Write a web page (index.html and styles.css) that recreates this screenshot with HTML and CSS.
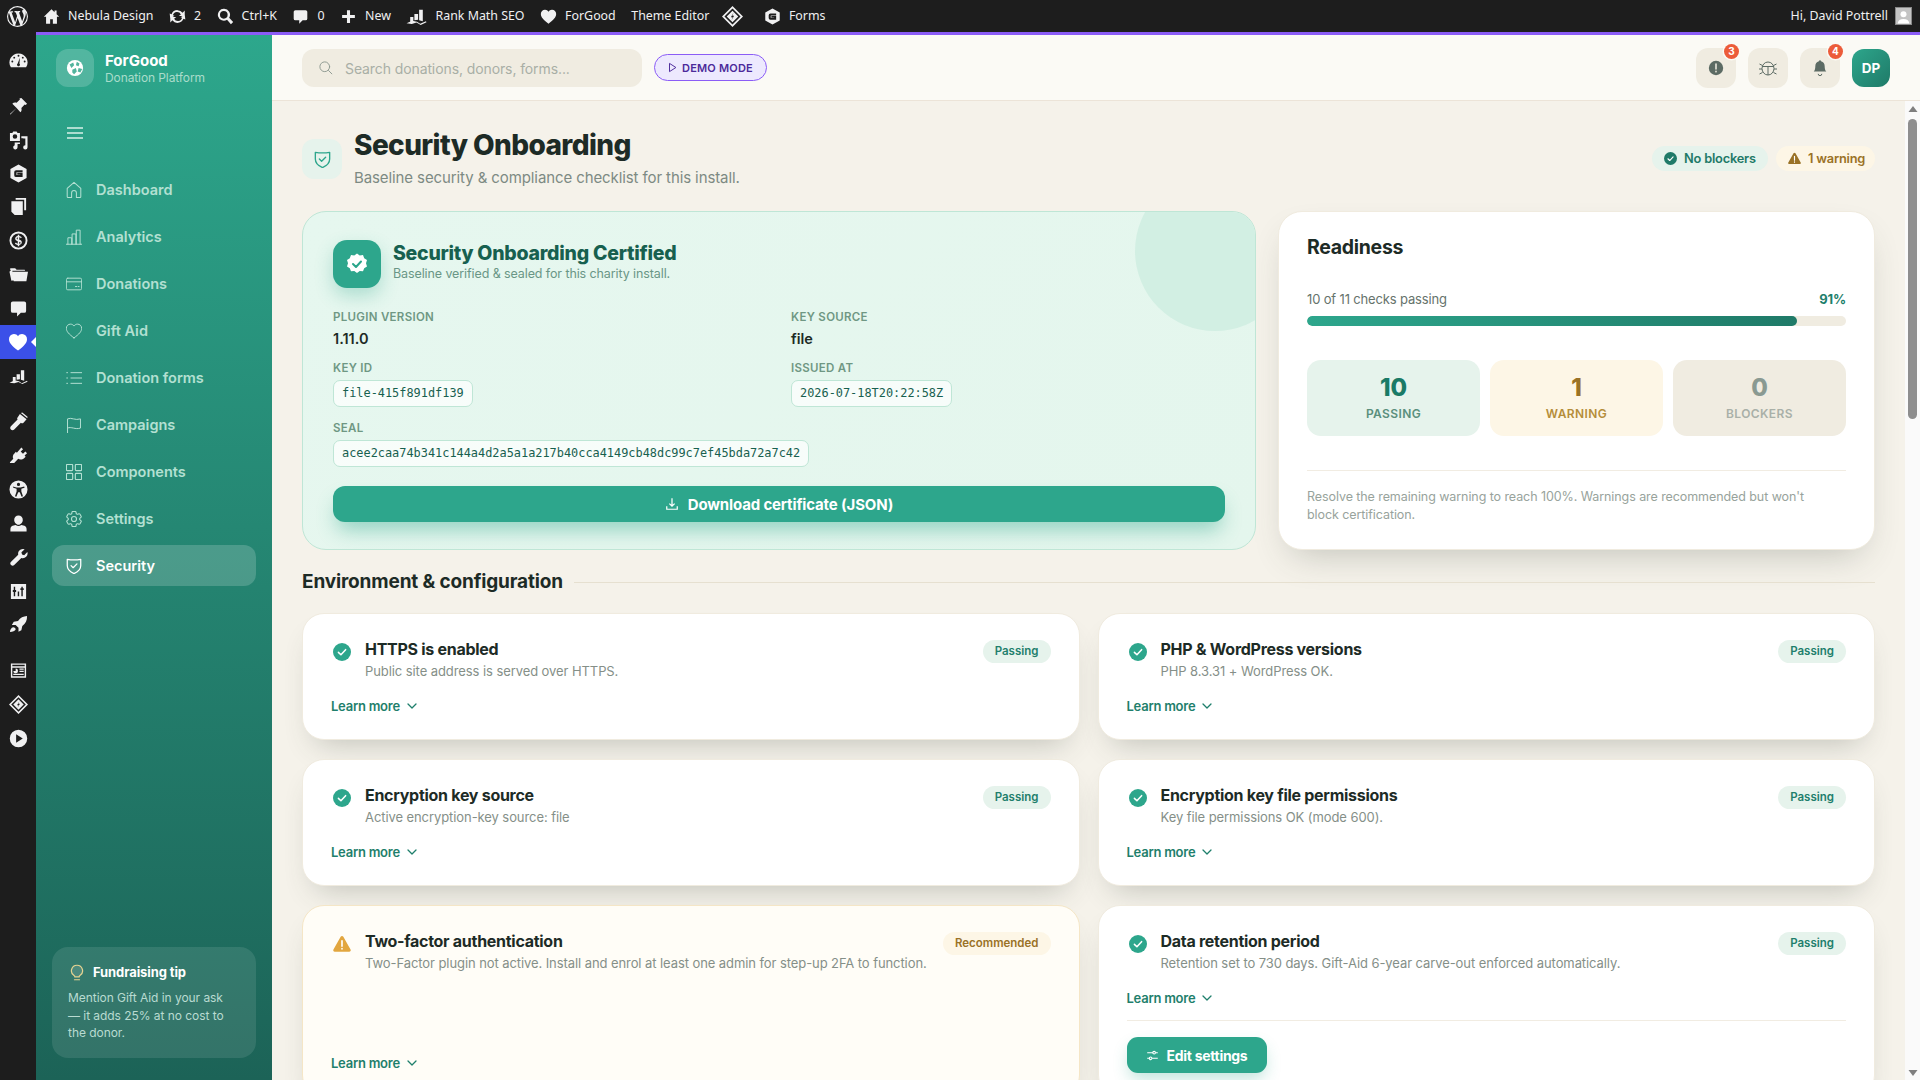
FILE: index.html
```html
<!DOCTYPE html>
<html lang="en">
<head>
<meta charset="utf-8">
<title>Security Onboarding</title>
<link rel="stylesheet" href="styles.css">
</head>
<body>
<svg class="sprite" xmlns="http://www.w3.org/2000/svg">
  <symbol id="wp" viewBox="0 0 20 20"><path fill-rule="evenodd" d="M10 0a10 10 0 1 0 0 20 10 10 0 0 0 0-20zM7.78 15.37 4.37 6.22c.55-.02 1.17-.08 1.17-.08.5-.06.44-1.13-.06-1.11 0 0-1.45.11-2.37.11-.18 0-.37 0-.58-.01C4.12 2.69 6.87 1.11 10 1.11c2.33 0 4.45.87 6.05 2.34-.68-.11-1.65.39-1.65 1.58 0 .74.45 1.36.9 2.1.35.61.55 1.36.55 2.46 0 1.49-1.4 5-1.4 5l-3.03-8.37c.54-.02.82-.17.82-.17.5-.05.44-1.25-.06-1.22 0 0-1.44.12-2.38.12-.87 0-2.33-.12-2.33-.12-.5-.03-.56 1.2-.06 1.22l.92.08 1.26 3.41zM17.41 10c.24-.64.74-1.87.43-4.25.7 1.29 1.05 2.71 1.05 4.25 0 3.29-1.73 6.24-4.4 7.78.97-2.59 1.94-5.2 2.92-7.78zM6.1 18.09C3.12 16.65 1.11 13.53 1.11 10c0-1.3.23-2.48.72-3.59C3.25 10.3 4.67 14.2 6.1 18.09zm4.03-6.63 2.58 6.98c-.86.29-1.76.45-2.71.45-.79 0-1.57-.11-2.29-.33.81-2.38 1.62-4.74 2.42-7.1z"/></symbol>
  <symbol id="home" viewBox="0 0 20 20"><path d="M10 1.500 1 10.200h2.600V18.500h4.800v-5.400h3.200v5.400h4.800v-8.300H19l-3-2.900V3h-2.400v2z"/></symbol>
  <symbol id="updates" viewBox="0 0 20 20"><path d="M10 2.500a7.500 7.500 0 0 0-7 4.800L.8 6.500l.7 6 4.900-3.400-1.800-.7A5 5 0 0 1 14 7.500L11.500 9.500h7V2.800L16 5.500A7.500 7.500 0 0 0 10 2.500zM8.500 10.500h-7v6.700L4 14.500a7.500 7.500 0 0 0 13-1.800l2.200.8-.7-6-4.900 3.400 1.800.7A5 5 0 0 1 6 12.500z"/></symbol>
  <symbol id="search" viewBox="0 0 20 20"><path fill-rule="evenodd" d="M8 1a7 7 0 1 0 3.800 12.900l4.600 5.100 2.600-2.400-4.700-5A7 7 0 0 0 8 1zm0 2.500a4.500 4.500 0 1 1 0 9 4.500 4.500 0 0 1 0-9z"/></symbol>
  <symbol id="comment" viewBox="0 0 20 20"><path d="M4 2.500h12a2 2 0 0 1 2 2v8a2 2 0 0 1-2 2h-3.500l-4 4v-4H4a2 2 0 0 1-2-2v-8a2 2 0 0 1 2-2z"/></symbol>
  <symbol id="plus" viewBox="0 0 20 20"><path d="M8.200 2.500h3.600v5.700h5.700v3.600h-5.700v5.700H8.200v-5.700H2.500V8.200h5.700z"/></symbol>
  <symbol id="rank" viewBox="0 0 20 20"><path d="M12.500 3.500h3.500v11l-3.500-1zM8 7.500h3.500V13L8 13.500zM4 10.500h3V14l-3 1.500zM.5 16.500 6 14l4.500 1 3 2 5.500-2.500.5 1L14 18l-4-2.200-4.500 1.400z"/></symbol>
  <symbol id="heart" viewBox="0 0 20 20"><path d="M10 18.500C4 14 1 10.800 1 7.200A4.900 4.900 0 0 1 6 2c1.700 0 3.200.9 4 2.300C10.800 2.900 12.300 2 14 2a4.900 4.900 0 0 1 5 5.200c0 3.600-3 6.800-9 11.300z"/></symbol>
  <symbol id="diamond" viewBox="0 0 20 20"><path fill-rule="evenodd" d="M10 0 20 10 10 20 0 10zm0 2.300L2.300 10l7.700 7.700 7.700-7.700zm0 2.200L15.500 10 10 15.500 4.500 10zm1 1.800L8.500 10.800h1.700L9 13.700l2.500-4.400H9.800z"/></symbol>
  <symbol id="gravity" viewBox="0 0 20 20"><path fill-rule="evenodd" d="M10 .5 18.500 5.300v9.400L10 19.500l-8.500-4.800V5.300zM7.500 6.500a2 2 0 0 0-2 2v3.300a2 2 0 0 0 2 2h6.800V9.300H8.700v1.900h3.200v.4H7.900V8.800h6.400V6.500z"/></symbol>
  <symbol id="gauge" viewBox="0 0 20 20"><path fill-rule="evenodd" d="M10 2.500a9.500 9.500 0 0 0-8 14.600h16a9.500 9.500 0 0 0-8-14.600zM10 4a1 1 0 1 1 0 2 1 1 0 0 1 0-2zM5.500 6a1 1 0 1 1 0 2 1 1 0 0 1 0-2zm9 0a1 1 0 1 1 0 2 1 1 0 0 1 0-2zM3.500 10a1 1 0 1 1 0 2 1 1 0 0 1 0-2zm13 0a1 1 0 1 1 0 2 1 1 0 0 1 0-2zM11.500 7l-.5 6.300a1.500 1.500 0 1 1-2 0z"/></symbol>
  <symbol id="pin" viewBox="0 0 20 20"><path d="M13 1l6 6-1.500 1.500-1-.5-3.500 3.500c.6 1.800.2 3.400-1 4.500L8 11.500l-6.500 7-.5-.5 7-6.500L3.500 7c1.100-1.200 2.700-1.600 4.500-1L11.500 2.500l-.5-1z"/></symbol>
  <symbol id="media" viewBox="0 0 20 20"><path fill-rule="evenodd" d="M1 2h2.500l1-1.500h3.500l1 1.500h2.500v8.500H1zM6.300 3.300a2.400 2.400 0 1 0 0 4.800 2.400 2.400 0 0 0 0-4.800zM13 5.500h6.500v11.700a2.300 2.300 0 1 1-2.300-2.300V8H15v-.5H13zM6 12h5.500v1.800H9v3.400a2.300 2.300 0 1 1-3-2.200z"/></symbol>
  <symbol id="pages" viewBox="0 0 20 20"><path d="M7 1h11v13h-2V3H7zM4 4.500h10.500V19H6l-3.500-3.500V4.500z"/></symbol>
  <symbol id="dollar" viewBox="0 0 20 20"><path fill-rule="evenodd" d="M10 .5a9.500 9.500 0 1 0 0 19 9.500 9.500 0 0 0 0-19zm0 2a7.500 7.500 0 1 1 0 15 7.500 7.500 0 0 1 0-15zM9.200 4v1.300C7.500 5.600 6.500 6.600 6.500 8c0 1.600 1.200 2.300 2.700 2.700v2.600c-.9-.2-1.600-.7-1.900-1.200l-1.100 1c.6.800 1.700 1.400 3 1.600V16h1.600v-1.300c1.700-.3 2.700-1.400 2.700-2.800 0-1.700-1.300-2.300-2.700-2.700V6.700c.7.100 1.300.5 1.700 1l1-1c-.6-.7-1.500-1.200-2.700-1.400V4zm0 2.700v2.200C8.400 8.600 8 8.300 8 7.800c0-.5.400-.9 1.200-1.100zm1.600 4.500c.8.300 1.400.6 1.400 1.100 0 .6-.5 1-1.400 1.100z"/></symbol>
  <symbol id="folder" viewBox="0 0 20 20"><path d="M2 5.500 1 4.500V4l1-.5h4.500L8 5h8.500l.5 1H3.500L5 16l-2.500.5L.5 7zM3.700 7H20l-1.700 10H5z"/></symbol>
  <symbol id="brush" viewBox="0 0 20 20"><path d="M11.500 2 18.500 7.500 15 11.500c-1 .7-1.600.4-2.500-.2L5.500 18.500c-1 .9-2.500.9-3.500 0s-.9-2.500 0-3.500L9 8l-.5-1.500zM12.500 1l1.500-.5 5.500 4.500-.2 1.500z"/></symbol>
  <symbol id="plug" viewBox="0 0 20 20"><path d="M13 1.500l1.800 1.800-2.500 2.500 2.400 2.400 2.500-2.500 1.800 1.800-2.600 2.600 1.100 1.100-1.300 1.300c-2.200 2-4.500 2.200-6.500 1L5.500 18H1v-1l3.500-3.500c-.9-2-.6-4.300 1.400-6L7.200 6l1.100 1.100z"/></symbol>
  <symbol id="access" viewBox="0 0 20 20"><path fill-rule="evenodd" d="M10 .5a9.500 9.500 0 1 0 0 19 9.500 9.500 0 0 0 0-19zm0 2.500a1.700 1.700 0 1 1 0 3.400A1.700 1.700 0 0 1 10 3zM4 6.800l4 1h4l4-1 .4 1.400-3.400 1v2.800l1.700 5-1.400.5-2-4.700h-1.600l-2 4.700-1.400-.5 1.700-5V9.200l-3.400-1z"/></symbol>
  <symbol id="users" viewBox="0 0 20 20"><path d="M10 1.500a4.500 4.500 0 0 1 4.500 4.800c0 2.500-2 5-4.500 5s-4.500-2.500-4.500-5A4.500 4.500 0 0 1 10 1.500zM7 11.500c2 1.600 4 1.600 6 0 3 .3 5.500 1.500 5.500 4v3h-17v-3c0-2.500 2.500-3.700 5.500-4z"/></symbol>
  <symbol id="wrench" viewBox="0 0 20 20"><path d="M14.500 1a5 5 0 0 1 2 .4l-3.400 3.200.6 2.300 2.300.6 3.300-3.300A5 5 0 0 1 13 10.500L5.500 18a2.300 2.300 0 0 1-3.300-3.400L9.700 7.100A5 5 0 0 1 14.500 1z"/></symbol>
  <symbol id="sliders" viewBox="0 0 20 20"><path fill-rule="evenodd" d="M2 2h16v16H2zM5 5v3.500H4v2h1V15h1.500v-4.500h1v-2h-1V5zm8 0v1.500h-1v2h1V15h1.500V8.500h1v-2h-1V5zM9.200 10v5h1.500v-5z"/></symbol>
  <symbol id="rocket" viewBox="0 0 20 20"><path d="M19 1c.2 4.500-1.500 8-5 10.500L13 16l-3 1.500v-4l-3-3H3L5 7l4.500-.8C12 2.800 15 1.200 19 1zM4.500 13c1.500 0 2.500 1 2.500 2.300-.8 1.500-3 2.400-6 2.700.2-2.500 1.300-4.500 3.500-5z"/></symbol>
  <symbol id="news" viewBox="0 0 20 20"><path fill-rule="evenodd" d="M2 2.500h16v15H2zm1.500 1.500v1.500h13V4zm0 3v9h13V7zM7 8a2.500 2.500 0 1 1-2.500 2.500H7zm4 0h4.500v1.300H11zm0 2.300h4.500v1.300H11zM4.500 13.500h11v1.300h-11z"/></symbol>
  <symbol id="play" viewBox="0 0 20 20"><path fill-rule="evenodd" d="M10 .8a9.200 9.200 0 1 0 0 18.400A9.200 9.200 0 0 0 10 .8zM7.500 5.500l7 4.500-7 4.500z"/></symbol>
  <symbol id="check-circle" viewBox="0 0 20 20"><circle cx="10" cy="10" r="10" fill="currentColor"/><path d="M6 10.400l2.800 2.700L14 7.400" fill="none" stroke="#fff" stroke-width="1.700" stroke-linecap="round" stroke-linejoin="round"/></symbol>
  <symbol id="triangle" viewBox="0 0 20 20"><path d="M8.500 2c.7-1.200 2.300-1.200 3 0l8 14c.7 1.200-.1 2.500-1.500 2.500H2c-1.400 0-2.200-1.300-1.500-2.500z" fill="currentColor"/><path d="M10 6.500v6M10 15v.6" stroke="#fff" stroke-width="1.800" stroke-linecap="round"/></symbol>
  <symbol id="chev" viewBox="0 0 12 12"><path d="M2 4l4 4 4-4" fill="none" stroke="currentColor" stroke-width="1.300" stroke-linecap="round" stroke-linejoin="round"/></symbol>
  <symbol id="shield" viewBox="3 3 18 19"><path d="M4 4.500c5 .8 11 .8 16 0V12c0 4.500-3.500 7.700-8 9.500C7.500 19.700 4 16.500 4 12z" fill="none" stroke="currentColor" stroke-width="1.500" stroke-linejoin="round"/><path d="M8.500 12l2.500 2.500 4.500-4.500" fill="none" stroke="currentColor" stroke-width="1.500" stroke-linecap="round" stroke-linejoin="round"/></symbol>
</svg>

<header class="adminbar">
  <div class="ab-group">
    <svg class="ab-wp"><use href="#wp"/></svg>
    <span class="ab-item"><svg class="ab-ic"><use href="#home"/></svg>Nebula Design</span>
    <span class="ab-item"><svg class="ab-ic"><use href="#updates"/></svg>2</span>
    <span class="ab-item"><svg class="ab-ic"><use href="#search"/></svg>Ctrl+K</span>
    <span class="ab-item"><svg class="ab-ic"><use href="#comment"/></svg>0</span>
    <span class="ab-item"><svg class="ab-ic"><use href="#plus"/></svg>New</span>
    <span class="ab-item"><svg class="ab-ic ab-ic-lg"><use href="#rank"/></svg>Rank Math SEO</span>
    <span class="ab-item"><svg class="ab-ic"><use href="#heart"/></svg>ForGood</span>
    <span class="ab-item ab-theme">Theme Editor</span>
    <span class="ab-item"><svg class="ab-ic ab-ic-lg"><use href="#diamond"/></svg></span>
    <span class="ab-item ab-forms"><svg class="ab-ic"><use href="#gravity"/></svg>Forms</span>
  </div>
  <div class="ab-user">Hi, David Pottrell
    <span class="ab-avatar"><svg viewBox="0 0 18 18"><circle cx="9" cy="7" r="3.600" fill="#fff"/><path d="M2 18c.5-4 3-5.500 7-5.500s6.500 1.500 7 5.500z" fill="#fff"/></svg></span>
  </div>
</header>

<div class="shell">
  <nav class="adminmenu">
    <span class="am am-first"><svg><use href="#gauge"/></svg></span>
    <span class="am am-sep"><svg><use href="#pin"/></svg></span>
    <span class="am"><svg><use href="#media"/></svg></span>
    <span class="am am-s"><svg><use href="#gravity"/></svg></span>
    <span class="am"><svg><use href="#pages"/></svg></span>
    <span class="am"><svg><use href="#dollar"/></svg></span>
    <span class="am"><svg><use href="#folder"/></svg></span>
    <span class="am"><svg><use href="#comment"/></svg></span>
    <span class="am am-active"><svg><use href="#heart"/></svg></span>
    <span class="am"><svg><use href="#rank"/></svg></span>
    <span class="am am-sep"><svg><use href="#brush"/></svg></span>
    <span class="am"><svg><use href="#plug"/></svg></span>
    <span class="am"><svg><use href="#access"/></svg></span>
    <span class="am"><svg><use href="#users"/></svg></span>
    <span class="am"><svg><use href="#wrench"/></svg></span>
    <span class="am"><svg><use href="#sliders"/></svg></span>
    <span class="am am-s"><svg><use href="#rocket"/></svg></span>
    <span class="am am-sep2"><svg><use href="#news"/></svg></span>
    <span class="am"><svg><use href="#diamond"/></svg></span>
    <span class="am"><svg><use href="#play"/></svg></span>
  </nav>

  <div class="app">
    <aside class="sidebar">
      <div class="brand">
        <span class="brand-logo">
          <svg viewBox="0 0 20 20"><circle cx="10" cy="10" r="9" fill="#fff"/><path d="M4 6l4-2 1 3-3 3zM12 3l3 2-1 3-3-1zM7 12l4-2 1 4-3 3-2-2zM14 10l4 1-2 4-3-1z" fill="#52b49e"/></svg>
        </span>
        <div class="brand-text"><strong>ForGood</strong><small>Donation Platform</small></div>
      </div>
      <svg class="burger" viewBox="0 0 16 12"><path d="M0 1h16M0 6h16M0 11h16" stroke="currentColor" stroke-width="1.500"/></svg>
      <ul class="nav">
        <li class="nav-item"><svg viewBox="2.500 2 19 20"><path d="M12 2.500 3.500 10v10a1.500 1.500 0 0 0 1.500 1.500h4v-6a3 3 0 0 1 6 0v6h4a1.500 1.500 0 0 0 1.500-1.500V10z"/></svg>Dashboard</li>
        <li class="nav-item"><svg viewBox="1.500 2 21 20"><path d="M2 21.500h20M4 21.500V13h5v8.500M9.500 21.500V8h5v13.500M15 21.500V3h5v18.500"/></svg>Analytics</li>
        <li class="nav-item"><svg viewBox="1 1 22 22"><rect x="1.500" y="4" width="21" height="16" rx="2"/><path d="M1.500 9h21M14 15.500h2M18 15.500h1"/></svg>Donations</li>
        <li class="nav-item"><svg viewBox="1.500 1.500 21 21"><path d="M12 21C5 16 2 12.500 2 8.500A5.300 5.300 0 0 1 7.500 3c1.900 0 3.500 1 4.500 2.500C13 4 14.600 3 16.500 3A5.300 5.300 0 0 1 22 8.500c0 4-3 7.500-10 12.500z"/></svg>Gift Aid</li>
        <li class="nav-item"><svg viewBox="1.500 1.500 21 21"><path d="M8 5h14M8 12h14M8 19h14M2.500 5h1M2.500 12h1M2.500 19h1"/></svg>Donation forms</li>
        <li class="nav-item"><svg viewBox="2.500 1.500 20 21"><path d="M4 22V4c5-2.500 10 2.500 17 0v12c-7 2.500-12-2.500-17 0"/></svg>Campaigns</li>
        <li class="nav-item"><svg viewBox="3 3 18 18"><rect x="3.500" y="3.500" width="7" height="7" rx="1"/><rect x="13.500" y="3.500" width="7" height="7" rx="1"/><rect x="3.500" y="13.500" width="7" height="7" rx="1"/><rect x="13.500" y="13.500" width="7" height="7" rx="1"/></svg>Components</li>
        <li class="nav-item"><svg viewBox="2.500 2.500 19 19"><path d="M9.594 3.940c.09-.542.56-.94 1.110-.94h2.593c.55 0 1.020.398 1.110.94l.213 1.281c.063.374.313.686.645.870.074.040.147.083.22.127.324.196.72.257 1.075.124l1.217-.456a1.125 1.125 0 011.370.49l1.296 2.247a1.125 1.125 0 01-.26 1.431l-1.003.827c-.293.24-.438.613-.431.992a6.759 6.759 0 010 .255c-.007.378.138.75.43.99l1.005.828c.424.35.534.954.26 1.43l-1.298 2.247a1.125 1.125 0 01-1.369.491l-1.217-.456c-.355-.133-.75-.072-1.076.124a6.570 6.570 0 01-.22.128c-.331.183-.581.495-.644.869l-.213 1.280c-.09.543-.56.941-1.110.941h-2.594c-.55 0-1.020-.398-1.110-.94l-.213-1.281c-.062-.374-.312-.686-.644-.870a6.520 6.520 0 01-.22-.127c-.325-.196-.72-.257-1.076-.124l-1.217.456a1.125 1.125 0 01-1.369-.49l-1.297-2.247a1.125 1.125 0 01.26-1.431l1.004-.827c.292-.24.437-.613.43-.992a6.932 6.932 0 010-.255c.007-.378-.138-.75-.43-.99l-1.004-.828a1.125 1.125 0 01-.26-1.430l1.297-2.247a1.125 1.125 0 011.370-.491l1.216.456c.356.133.751.072 1.076-.124.072-.044.146-.087.22-.128.332-.183.582-.495.644-.869l.214-1.281z"/><circle cx="12" cy="12" r="3"/></svg>Settings</li>
        <li class="nav-item nav-active"><svg><use href="#shield"/></svg>Security</li>
      </ul>
      <div class="tip">
        <div class="tip-head">
          <svg viewBox="0 0 16 20"><path d="M8 1.500a6.500 6.500 0 0 0-3.500 12c.6.400 1 1 1 1.700h5c0-.7.4-1.300 1-1.700A6.500 6.500 0 0 0 8 1.500zM5 18.500h6" fill="rgba(255,255,255,.12)" stroke="#e6d391" stroke-width="1.400" stroke-linecap="round"/></svg>
          Fundraising tip
        </div>
        <p>Mention Gift Aid in your ask — it adds 25% at no cost to the donor.</p>
      </div>
    </aside>

    <div class="right">
      <div class="topbar">
        <div class="search">
          <svg viewBox="0 0 20 20"><circle cx="9" cy="9" r="6.500"/><path d="M14 14l4.500 4.500"/></svg>
          <span>Search donations, donors, forms...</span>
        </div>
        <span class="demo"><svg viewBox="0 0 12 14"><path d="M2 1.500 10.500 7 2 12.500z"/></svg>DEMO MODE</span>
        <div class="top-actions">
          <span class="tbtn"><svg viewBox="0 0 20 20"><circle cx="10" cy="10" r="8" fill="#5c6b64"/><path d="M10 5.500v5.500M10 13.700v.6" stroke="#f0ece1" stroke-width="1.700" stroke-linecap="round"/></svg><b class="tbadge">3</b></span>
          <span class="tbtn"><svg class="bug" viewBox="0 0 20 20" fill="none" stroke="#5c6b64" stroke-width="1"><ellipse cx="10" cy="10.500" rx="6" ry="6.500"/><path d="M4.200 8.500h11.600M10 8.500V17M1.500 6l3 1.500M18.500 6l-3 1.500M1 11h3M19 11h-3M1.500 16l3-1.500M18.500 16l-3-1.500"/></svg></span>
          <span class="tbtn"><svg viewBox="0 0 20 20"><path d="M10 1.500a1.300 1.300 0 0 1 1.200 1.100c2.600.6 4 2.700 4 5.400 0 3 .6 4.800 1.800 6H3c1.200-1.200 1.800-3 1.800-6 0-2.700 1.400-4.800 4-5.400A1.300 1.300 0 0 1 10 1.500z" fill="#5c6b64"/><path d="M8 16.500a2 2 0 0 0 4 0" fill="none" stroke="#5c6b64" stroke-width="1.100"/></svg><b class="tbadge">4</b></span>
          <span class="avatar">DP</span>
        </div>
      </div>

      <div class="below">
        <main class="content">
          <section class="page-head">
            <span class="head-tile"><svg><use href="#shield"/></svg></span>
            <div class="head-text">
              <h1>Security Onboarding</h1>
              <p>Baseline security &amp; compliance checklist for this install.</p>
            </div>
            <div class="head-pills">
              <span class="hpill hpill-ok"><svg><use href="#check-circle"/></svg>No blockers</span>
              <span class="hpill hpill-warn"><svg><use href="#triangle"/></svg>1 warning</span>
            </div>
          </section>

          <section class="hero">
            <div class="cert">
              <div class="cert-head">
                <span class="cert-icon"><svg viewBox="0 0 24 24"><path d="M12 1.500l2.700 2 3.300-.4 1.200 3.100 2.800 1.800-1 3.200 1 3.200-2.800 1.800-1.200 3.100-3.300-.4-2.700 2-2.700-2-3.300.4-1.200-3.100-2.800-1.800 1-3.200-1-3.200 2.800-1.800L6 3.100l3.300.4z" fill="#fff"/><path d="M8 12l3 3 5-5.500" fill="none" stroke="#2aa58b" stroke-width="2" stroke-linecap="round" stroke-linejoin="round"/></svg></span>
                <div><h2>Security Onboarding Certified</h2><p>Baseline verified &amp; sealed for this charity install.</p></div>
              </div>
              <div class="cert-grid">
                <div><label>PLUGIN VERSION</label><div class="val">1.11.0</div></div>
                <div><label>KEY SOURCE</label><div class="val">file</div></div>
                <div><label>KEY ID</label><code>file-415f891df139</code></div>
                <div><label>ISSUED AT</label><code>2026-07-18T20:22:58Z</code></div>
                <div class="seal"><label>SEAL</label><code>acee2caa74b341c144a4d2a5a1a217b40cca4149cb48dc99c7ef45bda72a7c42</code></div>
              </div>
              <div class="dl-btn"><svg viewBox="0 0 16 16"><path d="M8 1.500v8.500M5 7.500 8 10.500l3-3M2 10.500v3.500h12v-3.500" fill="none" stroke="#fff" stroke-width="1.400"/></svg>Download certificate (JSON)</div>
            </div>

            <div class="ready">
              <h3>Readiness</h3>
              <div class="prog-row"><span>10 of 11 checks passing</span><b>91%</b></div>
              <div class="prog"><i style="width:91%"></i></div>
              <div class="stats">
                <div class="stat stat-ok"><b>10</b><span>PASSING</span></div>
                <div class="stat stat-warn"><b>1</b><span>WARNING</span></div>
                <div class="stat stat-none"><b>0</b><span>BLOCKERS</span></div>
              </div>
              <p class="ready-note">Resolve the remaining warning to reach 100%. Warnings are recommended but won't block certification.</p>
            </div>
          </section>

          <div class="sec-title"><h2>Environment &amp; configuration</h2><span></span></div>

          <section class="checks">
            <article class="check">
              <div class="check-top"><svg class="ci"><use href="#check-circle"/></svg><div class="check-body"><h4>HTTPS is enabled</h4><p>Public site address is served over HTTPS.</p></div><span class="pill">Passing</span></div>
              <div class="learn">Learn more <svg><use href="#chev"/></svg></div>
            </article>
            <article class="check">
              <div class="check-top"><svg class="ci"><use href="#check-circle"/></svg><div class="check-body"><h4>PHP &amp; WordPress versions</h4><p>PHP 8.3.31 + WordPress OK.</p></div><span class="pill">Passing</span></div>
              <div class="learn">Learn more <svg><use href="#chev"/></svg></div>
            </article>
            <article class="check">
              <div class="check-top"><svg class="ci"><use href="#check-circle"/></svg><div class="check-body"><h4>Encryption key source</h4><p>Active encryption-key source: file</p></div><span class="pill">Passing</span></div>
              <div class="learn">Learn more <svg><use href="#chev"/></svg></div>
            </article>
            <article class="check">
              <div class="check-top"><svg class="ci"><use href="#check-circle"/></svg><div class="check-body"><h4>Encryption key file permissions</h4><p>Key file permissions OK (mode 600).</p></div><span class="pill">Passing</span></div>
              <div class="learn">Learn more <svg><use href="#chev"/></svg></div>
            </article>
            <article class="check check-warn">
              <div class="check-top"><svg class="ci ci-warn"><use href="#triangle"/></svg><div class="check-body"><h4>Two-factor authentication</h4><p>Two-Factor plugin not active. Install and enrol at least one admin for step-up 2FA to function.</p></div><span class="pill pill-warn">Recommended</span></div>
              <div class="learn">Learn more <svg><use href="#chev"/></svg></div>
            </article>
            <article class="check">
              <div class="check-top"><svg class="ci"><use href="#check-circle"/></svg><div class="check-body"><h4>Data retention period</h4><p>Retention set to 730 days. Gift-Aid 6-year carve-out enforced automatically.</p></div><span class="pill">Passing</span></div>
              <div class="learn learn-fixed">Learn more <svg><use href="#chev"/></svg></div>
              <div class="check-foot"><span class="edit-btn"><svg viewBox="0 0 16 16"><path d="M1.500 4.500h7M12 4.500h2.500M1.500 11.500H4M7.500 11.500h7" fill="none" stroke="#fff" stroke-width="1.300"/><circle cx="10" cy="4.500" r="1.600" fill="none" stroke="#fff" stroke-width="1.300"/><circle cx="5.700" cy="11.500" r="1.600" fill="none" stroke="#fff" stroke-width="1.300"/></svg>Edit settings</span></div>
            </article>
          </section>
        </main>
        <div class="scrollbar">
          <svg class="sb-arrow" viewBox="0 0 10 8"><path d="M5 1l4.500 6h-9z"/></svg>
          <span class="sb-thumb"></span>
          <svg class="sb-arrow sb-down" viewBox="0 0 10 8"><path d="M5 7 .5 1h9z"/></svg>
        </div>
      </div>
    </div>
  </div>
</div>
</body>
</html>
```
FILE: styles.css
```css
* { box-sizing: border-box; }
html, body { margin: 0; height: 100%; overflow: hidden; }
body { display: flex; flex-direction: column; font-family: Inter, "Noto Sans", sans-serif; color: #1d2b26; background: #f5f2ea; }
h1, h2, h3, h4, p, ul { margin: 0; padding: 0; }
ul { list-style: none; }
svg { display: block; flex: none; }
.sprite { display: none; }

/* admin bar */
.adminbar { height: 32px; flex: none; background: #1d1d1d; color: #f0f0f1; display: flex; align-items: center; justify-content: space-between; font: 12.4px/32px "Noto Sans", sans-serif; padding: 0 8px 0 7px; }
.ab-group { display: flex; align-items: center; }
.ab-wp { width: 21px; height: 21px; fill: #f0f0f1; margin-right: 15px; }
.ab-item { display: flex; align-items: center; gap: 8px; margin-right: 15.500px; white-space: nowrap; }
.ab-ic { width: 17px; height: 17px; fill: #f0f0f1; }
.ab-ic-lg { width: 21px; height: 21px; }
.ab-theme { margin-right: 13px; }
.ab-forms { margin-left: 5px; }
.ab-user { display: flex; align-items: center; gap: 7px; }
.ab-avatar { width: 17px; height: 18px; background: #c4c4c4; border: 1px solid #888; overflow: hidden; }
.ab-avatar svg { width: 100%; height: 100%; }

.shell { flex: 1; display: flex; min-height: 0; }

/* WP admin menu */
.adminmenu { width: 36px; flex: none; background: #1d1d1d; padding-top: 11px; display: flex; flex-direction: column; }
.am { height: 34px; display: flex; align-items: center; justify-content: center; position: relative; }
.am svg { width: 19px; height: 19px; fill: #f0f0f1; }
.am-s { height: 32px; }
.am-sep { margin-top: 11px; }
.am-first + .am-sep { margin-top: 12px; }
.am-sep2 { margin-top: 13px; }
.am-active { background: #3b50e8; }
.am-active svg { fill: #fff; width: 20px; height: 20px; }
.am-active::after { content: ""; position: absolute; right: 0; top: 12px; border: 5px solid transparent; border-right-color: #fff; border-left-width: 0; }

.app { flex: 1; min-width: 0; display: flex; border-top: 3px solid #8b5cf6; }

/* sidebar */
.sidebar { width: 236px; flex: none; background: linear-gradient(180deg, #2da78c 0%, #1c6357 100%); padding: 14px 16px 22px; display: flex; flex-direction: column; }
.brand { display: flex; align-items: center; gap: 11px; padding-left: 4px; }
.brand-logo { width: 38px; height: 38px; border-radius: 12px; background: rgba(255,255,255,.18); display: flex; align-items: center; justify-content: center; }
.brand-logo svg { width: 18px; height: 18px; }
.brand-text { padding-top: 2px; }
.brand-text strong { display: block; font-size: 15px; line-height: 18px; font-weight: 700; color: #fff; }
.brand-text small { display: block; font-size: 12px; line-height: 16px; color: #a9dccb; letter-spacing: -.1px; }
.burger { width: 16px; height: 12px; color: #d9f1e9; margin: 40px 0 0 15px; }
.nav { margin-top: 30px; display: flex; flex-direction: column; gap: 6px; }
.nav-item { height: 41px; display: flex; align-items: center; gap: 14px; padding-left: 14px; border-radius: 12px; font-size: 14.5px; font-weight: 600; color: #b3e0d2; }
.nav-item svg { width: 16px; height: 16px; fill: none; stroke: #b3e0d2; stroke-width: 1.300; stroke-linecap: round; stroke-linejoin: round; }
.nav-active { background: rgba(255,255,255,.18); color: #fff; }
.nav-active svg { color: #fff; }
.tip { margin-top: auto; height: 111px; border-radius: 16px; background: rgba(255,255,255,.1); padding: 15px 16px; }
.tip-head { display: flex; align-items: center; gap: 9px; padding-left: 2px; font-size: 13px; line-height: 20px; font-weight: 700; color: #fff; letter-spacing: -.1px; }
.tip-head svg { width: 14px; height: 17px; }
.tip p { margin-top: 7px; max-width: 160px; font-size: 12px; line-height: 17.500px; color: #b9dbd1; letter-spacing: -.05px; }

/* right side */
.right { flex: 1; min-width: 0; display: flex; flex-direction: column; }
.topbar { height: 66px; flex: none; background: #fbfaf5; border-bottom: 1px solid #ece4d8; display: flex; align-items: center; padding: 0 30px; }
.search { width: 340px; height: 38px; border-radius: 12px; background: #f0ece1; display: flex; align-items: center; gap: 12px; padding-left: 16px; font-size: 14px; color: #a9afa6; letter-spacing: -.1px; }
.search span { padding-top: 1px; }
.search svg { width: 15px; height: 15px; fill: none; stroke: #8f9a92; stroke-width: 1.300; stroke-linecap: round; }
.demo { margin-left: 12px; height: 27px; width: 113px; border-radius: 14px; border: 1px solid #8b5cf6; background: #ede9fe; color: #4c2a9a; display: flex; align-items: center; justify-content: center; gap: 5px; font-size: 11px; font-weight: 600; letter-spacing: .2px; }
.demo svg { width: 9px; height: 11px; fill: none; stroke: #4c2a9a; stroke-width: 1.300; stroke-linejoin: round; }
.top-actions { margin-left: auto; display: flex; align-items: center; gap: 12px; }
.tbtn { width: 40px; height: 40px; border-radius: 12px; background: #f0ece1; display: flex; align-items: center; justify-content: center; position: relative; }
.tbtn svg { width: 18px; height: 18px; }
.tbtn .bug { width: 20px; height: 20px; }
.tbadge { position: absolute; top: -4px; right: -3px; min-width: 15px; height: 15px; border-radius: 8px; background: #ec5c3a; box-shadow: 0 0 0 1.500px #fbfaf5; color: #fff; font-size: 10px; line-height: 15px; font-weight: 700; text-align: center; }
.avatar { width: 38px; height: 38px; border-radius: 12px; background: linear-gradient(135deg, #2da68c, #1f7a68); color: #fff; font-size: 13.5px; font-weight: 700; display: flex; align-items: center; justify-content: center; }

.below { flex: 1; min-height: 0; display: flex; }
.content { flex: 1; min-width: 0; overflow: hidden; padding: 26px 30px 0; }

/* scrollbar */
.scrollbar { width: 15px; flex: none; background: #fafafa; display: flex; flex-direction: column; align-items: center; padding: 4px 0 3px; }
.sb-arrow { width: 10px; height: 8px; fill: #7f7f7f; }
.sb-thumb { width: 9px; height: 300px; margin-top: 6px; border-radius: 5px; background: #8e8e8e; }
.sb-down { margin-top: auto; }

/* page header */
.page-head { display: flex; align-items: center; height: 61px; }
.head-tile { width: 40px; height: 40px; margin-top: 3px; border-radius: 12px; background: #e6f3ec; color: #2da68c; display: flex; align-items: center; justify-content: center; }
.head-tile svg { width: 17px; height: 17px; }
.head-text { margin-left: 12px; }
.page-head h1 { font-size: 28px; line-height: 36px; font-weight: 800; letter-spacing: -.6px; color: #1d2b26; }
.page-head p { margin-top: 4px; font-size: 15px; line-height: 22px; color: #7d8a83; letter-spacing: -.1px; }
.head-pills { margin-left: auto; display: flex; gap: 8px; margin-top: 2px; }
.hpill { height: 25px; display: flex; align-items: center; gap: 7px; padding: 0 11px 0 12px; border-radius: 13px; font-size: 12.8px; font-weight: 600; letter-spacing: -.2px; white-space: nowrap; }
.hpill svg { width: 13px; height: 13px; }
.hpill-ok { width: 116px; background: #e6f3ec; color: #1f7a68; }
.hpill-warn { width: 99px; background: #fdf6e6; color: #9a7226; }

/* hero */
.hero { margin-top: 23px; display: grid; grid-template-columns: 954px 597px; gap: 22px; }
.cert { height: 339px; position: relative; overflow: hidden; border: 1px solid #bfe6d6; border-radius: 24px; padding: 28px 30px 0; background: linear-gradient(135deg, #e6f7ef, #e4f6ed); }
.cert::before { content: ""; position: absolute; top: -41px; right: -40px; width: 160px; height: 160px; border-radius: 50%; background: #d2efe3; }
.cert > * { position: relative; }
.cert-head { display: flex; align-items: flex-start; gap: 12px; }
.cert-icon { width: 48px; height: 48px; border-radius: 14px; background: #2da68c; box-shadow: 0 8px 18px rgba(45,166,140,.3); display: flex; align-items: center; justify-content: center; }
.cert-icon svg { width: 24px; height: 24px; }
.cert-head h2 { font-size: 19.5px; line-height: 26px; font-weight: 800; color: #17604f; letter-spacing: -.25px; }
.cert-head p { font-size: 12.5px; line-height: 16px; color: #6a9686; letter-spacing: -.1px; }
.cert-grid { margin-top: 21px; display: grid; grid-template-columns: 434px 434px; column-gap: 24px; row-gap: 11px; }
.cert-grid label { display: block; font-size: 11.5px; line-height: 16px; font-weight: 600; letter-spacing: .3px; color: #6f9783; }
.val { margin-top: 4px; font-size: 14.5px; line-height: 20px; font-weight: 600; color: #1d2b26; }
.cert-grid code { display: inline-block; margin-top: 4px; height: 27px; padding: 0 8px; border-radius: 7px; border: 1px solid #bfe6d6; background: rgba(255,255,255,.7); font: 400 11.9px/25px "DejaVu Sans Mono", monospace; color: #17604f; white-space: nowrap; }
.seal { grid-column: 1 / -1; margin-top: 2px; }
.dl-btn { margin-top: 19px; height: 36px; border-radius: 12px; background: #2da68c; color: #fff; box-shadow: 0 12px 20px -4px rgba(45,166,140,.45); display: flex; align-items: center; justify-content: center; gap: 9px; font-size: 15px; font-weight: 700; letter-spacing: -.15px; }
.dl-btn svg { width: 14px; height: 14px; }

.ready { height: 339px; border: 1px solid #f0ebdf; border-radius: 24px; background: #fff; padding: 21px 28px 0; box-shadow: 0 16px 36px -14px rgba(60,70,60,.3); }
.ready h3 { font-size: 19.5px; line-height: 28px; font-weight: 700; letter-spacing: -.3px; color: #1d2b26; }
.prog-row { margin-top: 28px; display: flex; justify-content: space-between; font-size: 13px; line-height: 20px; color: #66736c; letter-spacing: -.15px; }
.prog-row b { color: #1f7f6c; font-weight: 700; }
.prog { margin-top: 7px; height: 10px; border-radius: 5px; background: #f0ece1; overflow: hidden; }
.prog i { display: block; height: 100%; border-radius: 5px; background: linear-gradient(90deg, #2da68c, #1f7a68); }
.stats { margin-top: 34px; display: grid; grid-template-columns: repeat(3, 1fr); gap: 10px; padding-bottom: 34px; border-bottom: 1px solid #f1ece2; }
.stat { height: 76px; border-radius: 14px; display: flex; flex-direction: column; align-items: center; padding-top: 12px; }
.stat b { font-size: 24px; line-height: 32px; font-weight: 800; }
.stat span { margin-top: 1px; font-size: 12px; line-height: 18px; font-weight: 600; letter-spacing: .4px; }
.stat-ok { background: #e6f3ec; } .stat-ok b { color: #1a7a66; } .stat-ok span { color: #5a8f7d; }
.stat-warn { background: #fdf6e6; } .stat-warn b { color: #9a7226; } .stat-warn span { color: #b58d39; }
.stat-none { background: #f0ece1; } .stat-none b { color: #8a9a92; } .stat-none span { color: #a9b0a8; }
.ready-note { margin-top: 17px; max-width: 515px; font-size: 12.5px; line-height: 18px; color: #98a39c; letter-spacing: -.08px; }

/* section title */
.sec-title { margin-top: 20px; display: flex; align-items: center; gap: 11px; }
.sec-title h2 { font-size: 19px; line-height: 24px; font-weight: 700; letter-spacing: -.15px; color: #1d2b26; white-space: nowrap; }
.sec-title span { flex: 1; height: 1px; background: #e6e0d0; }

/* check cards */
.checks { margin-top: 19px; display: grid; grid-template-columns: 1fr 1fr; gap: 19px 18px; }
.check { border: 1px solid #f0ebdf; border-radius: 22px; background: #fff; padding: 24px 28px 23px; display: flex; flex-direction: column; box-shadow: 0 16px 30px -14px rgba(60,70,60,.3); }
.check-warn { background: #fffdf7; border-color: #f5e6c6; }
.check-top { display: flex; align-items: flex-start; }
.ci { width: 18px; height: 18px; margin: 5px 14px 0 2px; color: #2da68c; }
.ci-warn { width: 20px; height: 18px; margin: 5px 13px 0 1px; color: #e2a63f; }
.check-body { flex: 1; min-width: 0; }
.check h4 { font-size: 16px; line-height: 22px; font-weight: 700; letter-spacing: -.28px; color: #1d2b26; }
.check p { margin-top: 1px; font-size: 13px; line-height: 20px; color: #858f88; letter-spacing: -.08px; }
.pill { margin-top: 2px; height: 23px; padding: 0 12px; border-radius: 12px; background: #e6f3ec; color: #1f7f6c; font-size: 11.5px; line-height: 23px; font-weight: 600; white-space: nowrap; }
.pill-warn { background: #fdf6e6; color: #9a7226; }
.learn { margin-top: auto; padding-top: 15px; display: flex; align-items: center; gap: 6px; font-size: 13px; line-height: 20px; font-weight: 600; color: #1f7f6c; letter-spacing: -.25px; }
.learn svg { width: 12px; height: 12px; }
.learn-fixed { margin-top: 0; }
.check-foot { margin-top: 12px; padding-top: 16px; border-top: 1px solid #f1ece2; }
.edit-btn { width: 140px; height: 36px; border-radius: 11px; background: #2da68c; color: #fff; box-shadow: 0 8px 16px -2px rgba(45,166,140,.3); display: flex; align-items: center; justify-content: center; gap: 8px; font-size: 14px; font-weight: 700; letter-spacing: -.3px; }
.edit-btn svg { width: 13px; height: 13px; }
```
